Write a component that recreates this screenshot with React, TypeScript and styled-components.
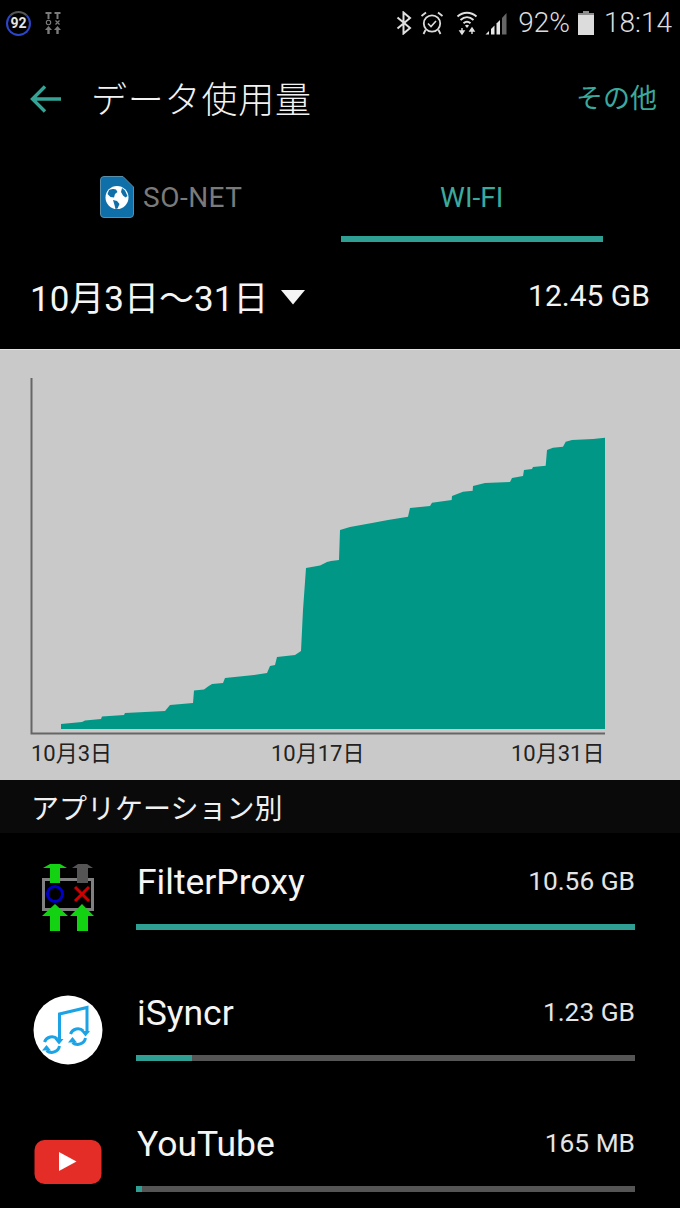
import React from "react";
import styled, { createGlobalStyle } from "styled-components";

const GlobalStyle = createGlobalStyle`
  html, body {
    margin: 0;
    padding: 0;
    background: #000;
  }
  body {
    font-family: Roboto, "Noto Sans CJK JP", sans-serif;
    color: #f2f2f2;
  }
`;

const Screen = styled.div`
  width: 680px;
  height: 1208px;
  overflow: hidden;
  background: #000;
`;

const StatusBar = styled.div`
  height: 48px;
  display: flex;
  align-items: center;
  justify-content: space-between;
  padding: 0 8px 2px 6px;
  box-sizing: border-box;
`;

const StatusGroup = styled.div`
  display: flex;
  align-items: center;
`;

const SpeedBadge = styled.div`
  width: 25px;
  height: 25px;
  border-radius: 50%;
  border: 2px solid #2b47c9;
  border-top-color: #555;
  box-sizing: border-box;
  display: flex;
  align-items: center;
  justify-content: center;
  font-size: 14px;
  font-weight: 700;
  color: #e6e6e6;
  margin-right: 14px;
`;

const StatusText = styled.span`
  font-size: 28px;
  font-weight: 300;
  color: #dcdcdc;
  line-height: 1;
`;

const Header = styled.div`
  height: 102px;
  display: flex;
  align-items: center;
  padding: 0 23px 0 29px;
`;

const BackButton = styled.svg`
  width: 34px;
  height: 30px;
  margin-right: 28px;
`;

const Title = styled.h1`
  flex: 1;
  margin: 0 0 4px;
  font-family: "Noto Sans CJK JP", sans-serif;
  font-size: 36px;
  font-weight: 300;
  letter-spacing: 0.8px;
  color: #f2f2f2;
`;

const MoreLink = styled.span`
  margin-bottom: 5px;
  font-family: "Noto Sans CJK JP", sans-serif;
  font-size: 27px;
  font-weight: 400;
  color: #3ba99c;
`;

const Tabs = styled.div`
  height: 95px;
  display: grid;
  grid-template-columns: 1fr 1fr;
  padding: 0 77px 0 78px;
`;

const Tab = styled.div<{ $active?: boolean }>`
  display: flex;
  align-items: center;
  justify-content: ${(p) => (p.$active ? "center" : "flex-start")};
  gap: 9px;
  height: 92px;
  box-sizing: border-box;
  padding: 8px 0 0 ${(p) => (p.$active ? "0" : "22px")};
  font-size: 28px;
  letter-spacing: ${(p) => (p.$active ? "0" : "0.5px")};
  color: ${(p) => (p.$active ? "#3ba99c" : "#7a7a7a")};
  border-bottom: 6px solid ${(p) => (p.$active ? "#2f9e93" : "transparent")};
`;

const DateRow = styled.div`
  height: 104px;
  box-sizing: border-box;
  padding: 0 30px 4px;
  display: flex;
  align-items: center;
  justify-content: space-between;
`;

const DateRange = styled.div`
  display: flex;
  align-items: center;
  gap: 13px;
  font-size: 35px;
  color: #f5f5f5;
`;

const Caret = styled.svg`
  width: 24px;
  height: 16px;
  margin-top: 4px;
`;

const TotalUsage = styled.span`
  font-size: 30px;
  color: #f2f2f2;
`;

const ChartPanel = styled.section`
  height: 431px;
  box-sizing: border-box;
  background: #c9c9c9;
  border-top: 1px solid #e2e2e2;
  padding: 28px 0 0 30px;
`;

const ChartSvg = styled.svg`
  display: block;
  width: 580px;
  height: 357px;
`;

const AxisLabels = styled.div`
  display: grid;
  grid-template-columns: 240px 240px auto;
  margin: 5px 0 0 1px;
  font-size: 22px;
  line-height: 28px;
  color: #222;
`;

const SectionLabel = styled.div`
  height: 53px;
  box-sizing: border-box;
  background: #0a0a0a;
  padding-left: 31px;
  display: flex;
  align-items: center;
  font-family: "Noto Sans CJK JP", sans-serif;
  font-size: 28px;
  font-weight: 400;
  color: #f0f0f0;
`;

const AppList = styled.div`
  display: flex;
  flex-direction: column;
`;

const AppRow = styled.div`
  height: 131px;
  flex: none;
  box-sizing: border-box;
  display: flex;
  align-items: flex-start;
  padding: 22px 45px 0 0;
`;

const AppIconSlot = styled.div<{ $drop: number }>`
  width: 136px;
  height: 84px;
  margin-top: ${(p) => p.$drop}px;
  flex: none;
  display: flex;
  align-items: center;
  justify-content: center;
`;

const AppBody = styled.div`
  flex: 1;
  display: flex;
  flex-direction: column;
`;

const AppLine = styled.div`
  height: 54px;
  display: flex;
  align-items: center;
  justify-content: space-between;
`;

const AppName = styled.span`
  font-size: 35.5px;
  padding-left: 1px;
  color: #f5f5f5;
`;

const AppSize = styled.span`
  margin-bottom: 2px;
  font-size: 26.3px;
  color: #e4e4e4;
`;

const Track = styled.div`
  height: 6px;
  margin-top: 15px;
  background: #555;
`;

const Fill = styled.div`
  height: 100%;
  background: #2f9e93;
`;

const chartPoints =
  "61,729 61,724 82,722 85,720.5 101,719 102,716.5 124,715 125,713 165,711 170,705 193,703 194,690.5 204,689.5 208,686.5 212,684 223,683 225,678 254,675 267,673 270,666 275,665 277,657 295,655 301,651 303,610 306,568 320,565.5 327,562 331,561 339,560 340,530 350,527 372,523 388,520 408,516.7 410,508 430,506 432,502.7 451.7,500 452,496 463,491.7 472.7,490.7 473,486 485,483 510,482 512,478 523,476 524,470 532,469 533,467 545.7,465.7 547,450 553,447.7 563,446.7 565.7,441.7 572,440 593,439 605,437.7 605,729";

// chart coordinates above are screen pixels, shifted into the svg via its viewBox
const UsageChart = () => (
  <ChartSvg viewBox="30 378 580 357">
    <polygon points={chartPoints} fill="#009786" />
    <path d="M31.5 378V733.5H605" fill="none" stroke="#666" strokeWidth="2" />
  </ChartSvg>
);

const BackArrow = () => (
  <BackButton viewBox="0 0 34 30">
    <path d="M32 15H4M16 2.500 3.500 15 16 27.500" fill="none" stroke="#35a497" strokeWidth="3.4" />
  </BackButton>
);

const NotifyIcon = () => (
  <svg width="16" height="22" viewBox="0 0 16 22">
    <g fill="#7b7b7b">
      <path d="M0.500 0h6v2H4.500v5h-2V2h-2zM9.500 0h6v2h-2v5h-2V2h-2z" />
      <path d="M3.500 14l3.500 4H4.700v4H2.300v-4H0zM12.500 14l3.500 4h-2.300v4h-2.400v-4H9z" />
    </g>
    <circle cx="3.500" cy="10.500" r="2.200" fill="none" stroke="#7b7b7b" strokeWidth="1.100" />
    <path d="M10.500 8.500l4 4M14.500 8.500l-4 4" stroke="#7b7b7b" strokeWidth="1.200" />
  </svg>
);

const BluetoothIcon = () => (
  <svg width="16" height="24" viewBox="0 0 16 24" style={{ marginRight: 8 }}>
    <path d="M1.500 6.500 14 17l-6.500 5.500v-21L14 7 1.500 17.500" fill="none" stroke="#e0e0e0" strokeWidth="2" />
  </svg>
);

const AlarmIcon = () => (
  <svg width="24" height="24" viewBox="0 0 24 24" style={{ marginRight: 12 }}>
    <circle cx="12" cy="12.500" r="8.200" fill="none" stroke="#dcdcdc" strokeWidth="1.800" />
    <path d="M8 12.500l3 3 5-5.500" fill="none" stroke="#dcdcdc" strokeWidth="1.600" />
    <path d="M1.500 5 6 1.500M22.500 5 18 1.500M5.500 19 3.500 23M18.500 19l2 4" stroke="#dcdcdc" strokeWidth="1.800" fill="none" />
  </svg>
);

const WifiIcon = () => (
  <svg width="22" height="26" viewBox="0 0 22 26" style={{ marginRight: 7 }}>
    <g fill="none" stroke="#e0e0e0" strokeWidth="1.900">
      <path d="M1.500 6.500C7 1.500 15 1.500 20.500 6.500" />
      <path d="M4.500 10c4-3.600 9-3.600 13 0" />
      <path d="M7.500 13.300c2.200-2 4.800-2 7 0" />
    </g>
    <path d="M11 18l-2-2.600c1.200-.8 2.800-.8 4 0z" fill="#e0e0e0" />
    <path d="M6 18v4M4 21l2 3 2-3zM16 24v-4M14 21l2-3 2 3z" fill="#e0e0e0" stroke="#e0e0e0" strokeWidth="1.400" />
  </svg>
);

const SignalIcon = () => (
  <svg width="23" height="24" viewBox="0 0 22 24" style={{ marginRight: 10 }}>
    <path d="M0 23.500 3.500 20v3.500z" fill="#e6e6e6" />
    <path d="M5.500 18 9 14.500v9H5.500z" fill="#e6e6e6" />
    <path d="M11 12.500 14.500 9v14.500H11z" fill="#e6e6e6" />
    <path d="M16.500 7 21 2v21.500h-4.500z" fill="#666" />
  </svg>
);

const BatteryIcon = () => (
  <svg width="16" height="24" viewBox="0 0 16 24" style={{ margin: "0 10px 0 8px" }}>
    <path d="M5 0h6v2h5v22H0V2h5z" fill="#dcdcdc" />
    <path d="M5 0h6v2h5v2H0V2h5z" fill="#8d8d8d" />
  </svg>
);

const SimGlobeIcon = () => (
  <svg width="34" height="42" viewBox="0 0 34 42">
    <path d="M4 .5H23L33.500 11V38a3.500 3.500 0 0 1-3.500 3.500H4A3.500 3.500 0 0 1 .5 38V4A3.500 3.500 0 0 1 4 .5z" fill="#0f6fa8" stroke="#5b8fa8" strokeWidth="1" />
    <circle cx="17" cy="21.500" r="11.500" fill="#fff" />
    <path d="M9 14c3-1 5-1.500 7-.5l1.500 2.500-2.500 2-1 3.500-3.500-.5-3-3zM13 24l4 1 2.500 3-2 4.500-2 .5-1-4zM22 12l3 2.500 2.500 5.500-2 1.500-2.500-2-2-3.500z" fill="#0f6fa8" />
  </svg>
);

const FilterProxyIcon = () => (
  <svg width="52" height="67" viewBox="0 0 52 67">
    <rect x="1.500" y="15.500" width="49" height="30" fill="none" stroke="#808080" strokeWidth="3" />
    <path d="M1 4 8 0H18L25 4H18V19H8V4z" fill="#12d212" />
    <path d="M30 4 36 0H45L51 4H46V19H35V4z" fill="#555" />
    <circle cx="13" cy="30" r="7.500" fill="none" stroke="#0000c8" strokeWidth="3" />
    <path d="M33 23 47 37M47 23 33 37" stroke="#d00000" strokeWidth="3" />
    <path d="M13 40 26 52H18V67H8V52H0z" fill="#12d212" />
    <path d="M40 40 52 52H46V67H35V52H28z" fill="#12d212" />
  </svg>
);

const ISyncrIcon = () => (
  <svg width="70" height="70" viewBox="0 0 70 70">
    <circle cx="35" cy="35" r="34.500" fill="#fff" />
    <g fill="none" stroke="#1ba3e6" strokeWidth="3">
      <path d="M26.500 46V19L54 12.500V38" />
      <path d="M11.500 47a8 8 0 0 1 13-3M26.500 51a8 8 0 0 1-13 4.500" />
      <path d="M37.500 39a8 8 0 0 1 13-3M52.500 43a8 8 0 0 1-13 4.500" />
    </g>
    <path d="M21.500 44h9l-4.500 5.500zM18 55.500H9l4.500-5.500zM48 36h9l-4.500 5.500zM44 47.500h-9l4.500-5.500z" fill="#1ba3e6" />
  </svg>
);

const YouTubeIcon = () => (
  <svg width="68" height="44" viewBox="0 0 68 44">
    <rect x="0.500" y="0" width="67" height="44" rx="10" fill="#e52d27" />
    <path d="M25 12 42.500 21.500 25 31z" fill="#fff" />
  </svg>
);

const apps = [
  { name: "FilterProxy", size: "10.56 GB", percent: 100, drop: 0, Icon: FilterProxyIcon },
  { name: "iSyncr", size: "1.23 GB", percent: 11.2, drop: 2, Icon: ISyncrIcon },
  { name: "YouTube", size: "165 MB", percent: 1.2, drop: 3, Icon: YouTubeIcon },
];

const App: React.FC = () => {
  return (
    <>
      <GlobalStyle />
      <Screen>
        <StatusBar>
          <StatusGroup>
            <SpeedBadge>92</SpeedBadge>
            <NotifyIcon />
          </StatusGroup>
          <StatusGroup>
            <BluetoothIcon />
            <AlarmIcon />
            <WifiIcon />
            <SignalIcon />
            <StatusText>92%</StatusText>
            <BatteryIcon />
            <StatusText>18:14</StatusText>
          </StatusGroup>
        </StatusBar>

        <Header>
          <BackArrow />
          <Title>データ使用量</Title>
          <MoreLink>その他</MoreLink>
        </Header>

        <Tabs>
          <Tab>
            <SimGlobeIcon />
            SO-NET
          </Tab>
          <Tab $active>WI-FI</Tab>
        </Tabs>

        <DateRow>
          <DateRange>
            10月3日～31日
            <Caret viewBox="0 0 24 16">
              <path d="M0 1H24L12 15.500z" fill="#f5f5f5" />
            </Caret>
          </DateRange>
          <TotalUsage>12.45 GB</TotalUsage>
        </DateRow>

        <ChartPanel>
          <UsageChart />
          <AxisLabels>
            <span>10月3日</span>
            <span>10月17日</span>
            <span>10月31日</span>
          </AxisLabels>
        </ChartPanel>

        <SectionLabel>アプリケーション別</SectionLabel>

        <AppList>
          {apps.map(({ name, size, percent, drop, Icon }) => (
            <AppRow key={name}>
              <AppIconSlot $drop={drop}>
                <Icon />
              </AppIconSlot>
              <AppBody>
                <AppLine>
                  <AppName>{name}</AppName>
                  <AppSize>{size}</AppSize>
                </AppLine>
                <Track>
                  <Fill style={{ width: `${percent}%` }} />
                </Track>
              </AppBody>
            </AppRow>
          ))}
        </AppList>
      </Screen>
    </>
  );
};

export default App;
